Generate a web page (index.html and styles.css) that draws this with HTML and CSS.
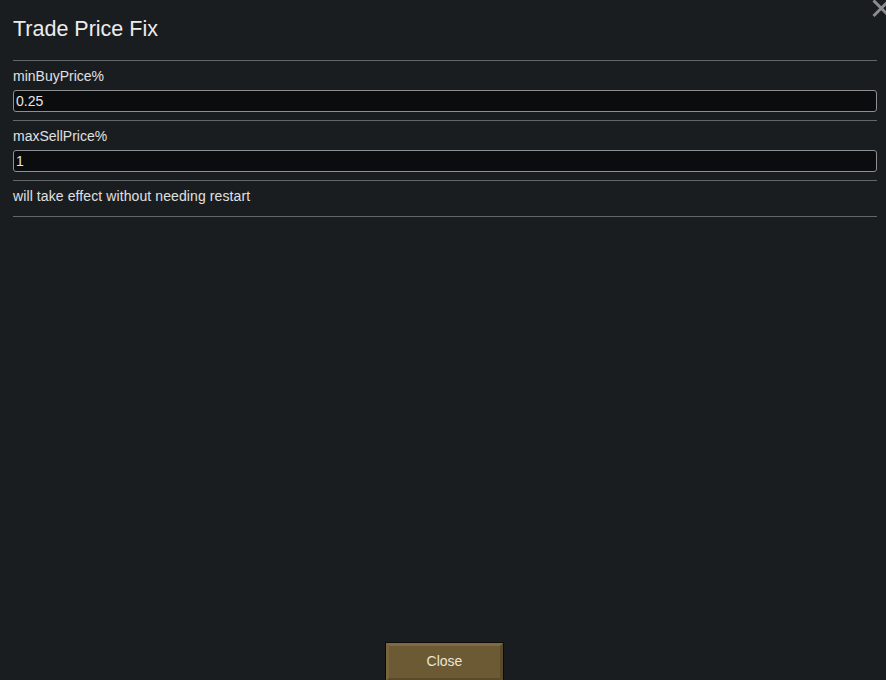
FILE: index.html
```html
<!DOCTYPE html>
<html>
<head>
<meta charset="utf-8">
<link rel="stylesheet" href="styles.css">
</head>
<body>
<div class="window">
  <div class="content">
    <h1 class="title">Trade Price Fix</h1>
    <div class="sep"></div>
    <div class="field">
      <div class="label">minBuyPrice%</div>
      <div class="input">0.25</div>
    </div>
    <div class="sep"></div>
    <div class="field">
      <div class="label">maxSellPrice%</div>
      <div class="input">1</div>
    </div>
    <div class="sep"></div>
    <div class="note">will take effect without needing restart</div>
    <div class="sep"></div>
  </div>
  <div class="footer">
    <div class="btn"><span>Close</span></div>
  </div>
  <svg class="close-x" width="18" height="18" viewBox="0 0 18 18">
    <path d="M1.5 0.5 L17 16 M17 0.5 L1.5 16" stroke="#8c8d8e" stroke-width="3" fill="none"/>
  </svg>
</div>
</body>
</html>
```
FILE: styles.css
```css
html, body {
  margin: 0;
  padding: 0;
  background: #1a1d20;
  overflow: hidden;
}
.window {
  position: relative;
  width: 886px;
  height: 680px;
  display: flex;
  flex-direction: column;
  font-family: "Liberation Sans", Arial, sans-serif;
  color: #e2e2e2;
}
.content {
  padding: 0 9px 0 13px;
  display: flex;
  flex-direction: column;
}
.title {
  margin: 0;
  padding-top: 16px;
  height: 60px;
  box-sizing: border-box;
  font-size: 21.5px;
  line-height: 26px;
  font-weight: normal;
  color: #ececec;
}
.sep {
  height: 1px;
  background: #64676a;
}
.field {
  padding: 7px 0 8px;
  display: flex;
  flex-direction: column;
  gap: 6px;
}
.label {
  font-size: 14px;
  line-height: 16px;
  color: #e0e0e0;
}
.input {
  height: 22px;
  box-sizing: border-box;
  border: 1px solid #8d8f91;
  border-radius: 3px;
  background: #0b0c0d;
  font-size: 14px;
  line-height: 20px;
  padding-left: 2px;
  color: #e6e6e6;
}
.note {
  font-size: 14px;
  line-height: 16px;
  letter-spacing: 0.1px;
  padding: 7px 0 12px;
  color: #e0e0e0;
}
.footer {
  margin-top: auto;
  display: flex;
  justify-content: center;
  padding-left: 3px;
}
.btn {
  width: 119px;
  height: 40px;
  box-sizing: border-box;
  border: 1px solid #0c0c0c;
  background: #0c0c0c;
  margin-bottom: -2px;
  display: flex;
}
.btn span {
  flex: 1;
  display: flex;
  justify-content: center;
  box-sizing: border-box;
  font-size: 14px;
  line-height: 16px;
  color: #ece4d2;
  background: #6c5a34;
  border-top: 3px solid #7f6b42;
  border-left: 3px solid #78653d;
  border-right: 3px solid #5a4a29;
  border-bottom: 3px solid #5a4a29;
  padding-top: 7px;
}
.close-x {
  position: absolute;
  left: 872px;
  top: 0;
}
```
